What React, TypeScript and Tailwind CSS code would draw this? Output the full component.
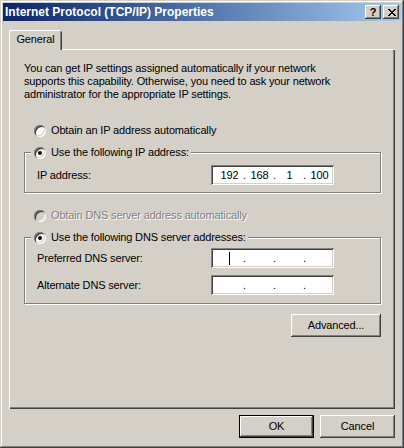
import { Fragment } from 'react'

const raised =
  'shadow-[inset_-1px_-1px_#404040,inset_1px_1px_#fff,inset_-2px_-2px_#808080,inset_2px_2px_#D4D0C8]'
const sunken =
  'shadow-[inset_1px_1px_#808080,inset_-1px_-1px_#fff,inset_2px_2px_#404040,inset_-2px_-2px_#D4D0C8]'

function Radio({ checked = false, disabled = false }: { checked?: boolean; disabled?: boolean }) {
  return (
    <span
      className={`flex h-[12px] w-[12px] shrink-0 items-center justify-center rounded-full ${sunken} ${
        disabled ? 'bg-[#D4D0C8]' : 'bg-white'
      }`}
    >
      {checked && <span className="h-[4px] w-[4px] rounded-full bg-black" />}
    </span>
  )
}

function RadioRow({ label, checked, disabled }: { label: string; checked?: boolean; disabled?: boolean }) {
  return (
    <div className="flex h-[13px] items-center gap-[5px] pl-[10px]">
      <Radio checked={checked} disabled={disabled} />
      <span
        className={
          disabled ? 'text-[#808080] [text-shadow:1px_1px_0_#fff]' : 'text-black'
        }
      >
        {label}
      </span>
    </div>
  )
}

function IpBox({ values, caret = false }: { values: string[]; caret?: boolean }) {
  return (
    <div className={`flex h-[20px] w-[123px] items-center overflow-hidden bg-white pl-[5px] ${sunken}`}>
      {values.map((v, i) => (
        <Fragment key={i}>
          <span className="flex w-[27px] justify-center">
            {caret && i === 0 ? <span className="h-[13px] w-px bg-black" /> : v}
          </span>
          {i < 3 && <span className="w-[3px] text-center">.</span>}
        </Fragment>
      ))}
    </div>
  )
}

function Group({ legend, children, pb }: { legend: string; children: React.ReactNode; pb: string }) {
  return (
    <div className={`flex flex-col border border-[#808080] shadow-[inset_1px_1px_#fff,1px_1px_#fff] ${pb}`}>
      <div className="-mt-[7px] ml-[6px] flex h-[13px] w-fit items-center gap-[5px] bg-[#D4D0C8] pl-[3px] pr-[2px]">
        <Radio checked />
        <span>{legend}</span>
      </div>
      {children}
    </div>
  )
}

function Field({ label, children, mt }: { label: string; children: React.ReactNode; mt: string }) {
  return (
    <div className={`flex h-[20px] items-center pl-[12px] ${mt}`}>
      <span className="w-[174px]">{label}</span>
      {children}
    </div>
  )
}

function CloseGlyph() {
  const px = [
    [0, 0], [1, 0], [6, 0], [7, 0],
    [1, 1], [2, 1], [5, 1], [6, 1],
    [2, 2], [3, 2], [4, 2], [5, 2],
    [3, 3], [4, 3],
    [2, 4], [3, 4], [4, 4], [5, 4],
    [1, 5], [2, 5], [5, 5], [6, 5],
    [0, 6], [1, 6], [6, 6], [7, 6],
  ]
  return (
    <svg width="8" height="7" viewBox="0 0 8 7" shapeRendering="crispEdges">
      {px.map(([x, y]) => (
        <rect key={`${x}-${y}`} x={x} y={y} width="1" height="1" fill="#000" />
      ))}
    </svg>
  )
}

export default function App() {
  return (
    <div className="flex h-[448px] w-[404px] flex-col bg-[#D4D0C8] p-[3px] font-['Liberation_Sans',Arial,sans-serif] text-[11px] leading-[13px] tracking-[-0.15px] text-black shadow-[inset_-1px_-1px_#404040,inset_1px_1px_#D4D0C8,inset_-2px_-2px_#808080,inset_2px_2px_#fff]">
      {/* title bar */}
      <div className="flex h-[18px] items-center bg-gradient-to-r from-[#0A246A] to-[#A6CAF0] pl-[2px] pr-[2px]">
        <span className="flex-1 text-[12px] font-bold tracking-normal text-white">Internet Protocol (TCP/IP) Properties</span>
        <button className={`flex h-[14px] w-[16px] items-center justify-center bg-[#D4D0C8] pt-px text-[11px] font-bold ${raised}`}>
          ?
        </button>
        <button className={`ml-[2px] flex h-[14px] w-[16px] items-center justify-center bg-[#D4D0C8] pl-px ${raised}`}>
          <CloseGlyph />
        </button>
      </div>

      <div className="flex flex-1 flex-col px-[6px] pt-[9px]">
        {/* tab */}
        <div className="relative z-10 -mb-px flex h-[20px] w-[53px] items-start justify-center rounded-t-[2px] bg-[#D4D0C8] pt-[3px] shadow-[inset_1px_0_#fff,inset_0_1px_#fff,inset_-1px_0_#404040,inset_-2px_0_#808080]">
          General
        </div>

        {/* panel */}
        <div className="flex h-[360px] flex-col pl-[15px] pr-[14px] pt-[13px] shadow-[inset_1px_1px_#fff,inset_-1px_-1px_#404040,inset_-2px_-2px_#808080]">
          <p className="whitespace-nowrap">
            You can get IP settings assigned automatically if your network
            <br />
            supports this capability. Otherwise, you need to ask your network
            <br />
            administrator for the appropriate IP settings.
          </p>

          <div className="mt-[23px]">
            <RadioRow label="Obtain an IP address automatically" />
          </div>

          <div className="mt-[15px]">
            <Group legend="Use the following IP address:" pb="pb-[7px]">
              <Field label="IP address:" mt="mt-[6px]">
                <IpBox values={['192', '168', '1', '100']} />
              </Field>
            </Group>
          </div>

          <div className="mt-[16px]">
            <RadioRow label="Obtain DNS server address automatically" disabled />
          </div>

          <div className="mt-[15px]">
            <Group legend="Use the following DNS server addresses:" pb="pb-[8px]">
              <Field label="Preferred DNS server:" mt="mt-[4px]">
                <IpBox values={['', '', '', '']} caret />
              </Field>
              <Field label="Alternate DNS server:" mt="mt-[7px]">
                <IpBox values={['', '', '', '']} />
              </Field>
            </Group>
          </div>

          <button className={`mt-[10px] flex h-[23px] w-[90px] items-center justify-center self-end bg-[#D4D0C8] ${raised}`}>
            Advanced...
          </button>
        </div>

        {/* dialog buttons */}
        <div className="mt-[6px] flex justify-end gap-[6px]">
          <button className="h-[23px] w-[75px] border border-black bg-[#D4D0C8]">
            <span className={`flex h-full w-full items-center justify-center ${raised}`}>OK</span>
          </button>
          <button className={`flex h-[23px] w-[75px] items-center justify-center bg-[#D4D0C8] ${raised}`}>
            Cancel
          </button>
        </div>
      </div>
    </div>
  )
}
